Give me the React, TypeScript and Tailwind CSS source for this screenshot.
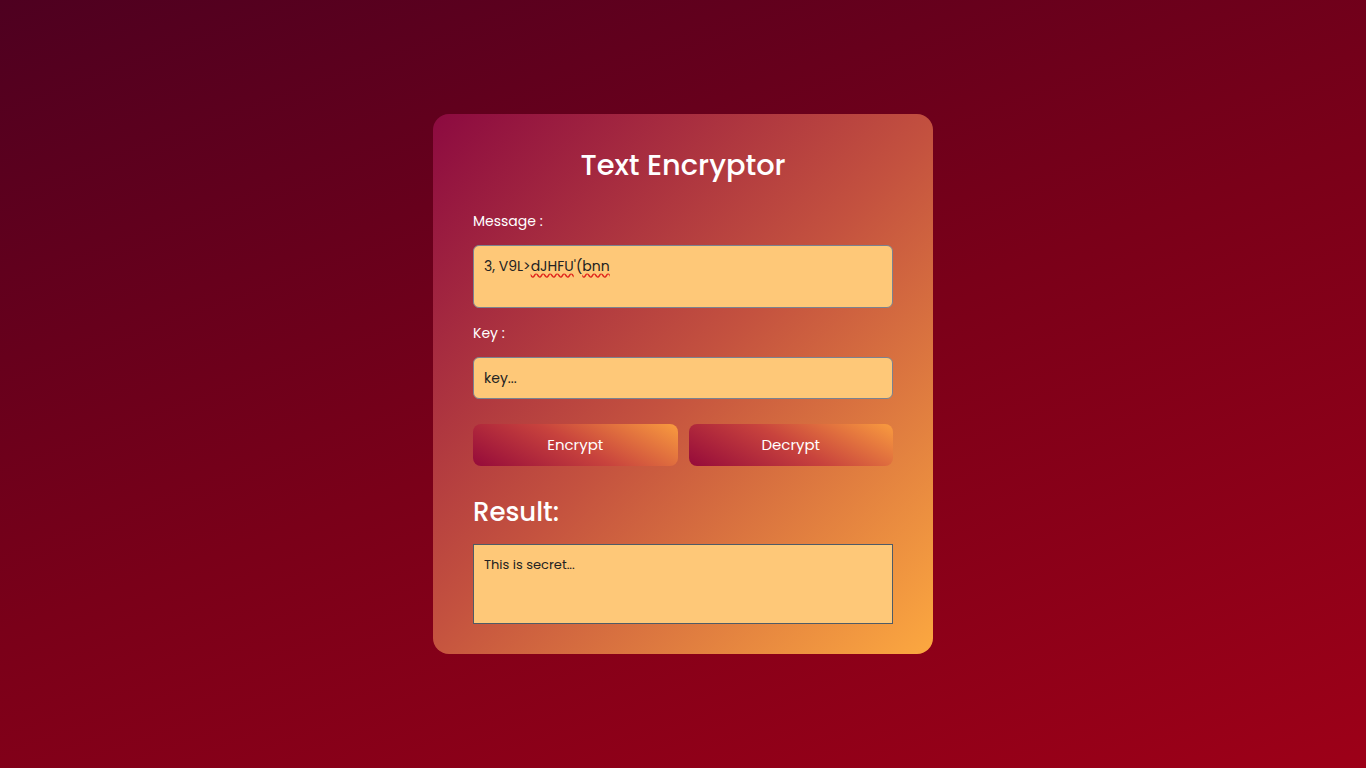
import { useState } from "react";

const font = { fontFamily: "Poppins, Inter, 'Noto Sans', sans-serif" };

export default function App() {
  const [key, setKey] = useState("");

  return (
    <div
      className="flex min-h-screen w-full items-center justify-center bg-[linear-gradient(160deg,#4e0020_0%,#7a0019_50%,#9d0018_100%)]"
      style={font}
    >
      <div className="flex w-[500px] flex-col rounded-2xl bg-[linear-gradient(135deg,#8c0a40_0%,#c4523f_50%,#fca840_100%)] px-10 pt-[33px] pb-[30px]">
        <h1 className="text-center text-[28.8px] leading-9 font-medium text-white">
          Text Encryptor
        </h1>

        <label className="mt-[28px] text-sm leading-5 text-white">Message :</label>
        <div className="mt-[14px] h-[63px] rounded-md border border-[#7b8290] bg-[#fec878] px-[10px] py-[10px] text-sm leading-5 text-[#222]">
          3, V9L&gt;
          <span className="underline decoration-[#e0241b] decoration-wavy underline-offset-2">dJHFU</span>
          '(
          <span className="underline decoration-[#e0241b] decoration-wavy underline-offset-2">bnn</span>
        </div>

        <label className="mt-[15px] text-sm leading-5 text-white">Key :</label>
        <input
          value={key}
          onChange={(e) => setKey(e.target.value)}
          placeholder="key..."
          className="mt-[14px] h-[42px] rounded-md border border-[#7b8290] bg-[#fec878] px-[10px] text-sm text-[#222] outline-none placeholder:text-[#222]"
        />

        <div className="mt-[25px] flex gap-[11px]">
          <button className="h-[42px] flex-1 rounded-lg bg-[linear-gradient(30deg,#950a3a_0%,#c8433d_50%,#f99c3f_100%)] text-[15px] text-white">
            Encrypt
          </button>
          <button className="h-[42px] flex-1 rounded-lg bg-[linear-gradient(30deg,#950a3a_0%,#c8433d_50%,#f99c3f_100%)] text-[15px] text-white">
            Decrypt
          </button>
        </div>

        <h2 className="mt-[30px] text-[26px] leading-8 font-medium text-white">Result:</h2>
        <div className="mt-4 h-[80px] border border-[#4f5b66] bg-[#fec878] px-[10px] py-[10px] text-[13px] leading-5 text-[#222]">
          This is secret...
        </div>
      </div>
    </div>
  );
}
